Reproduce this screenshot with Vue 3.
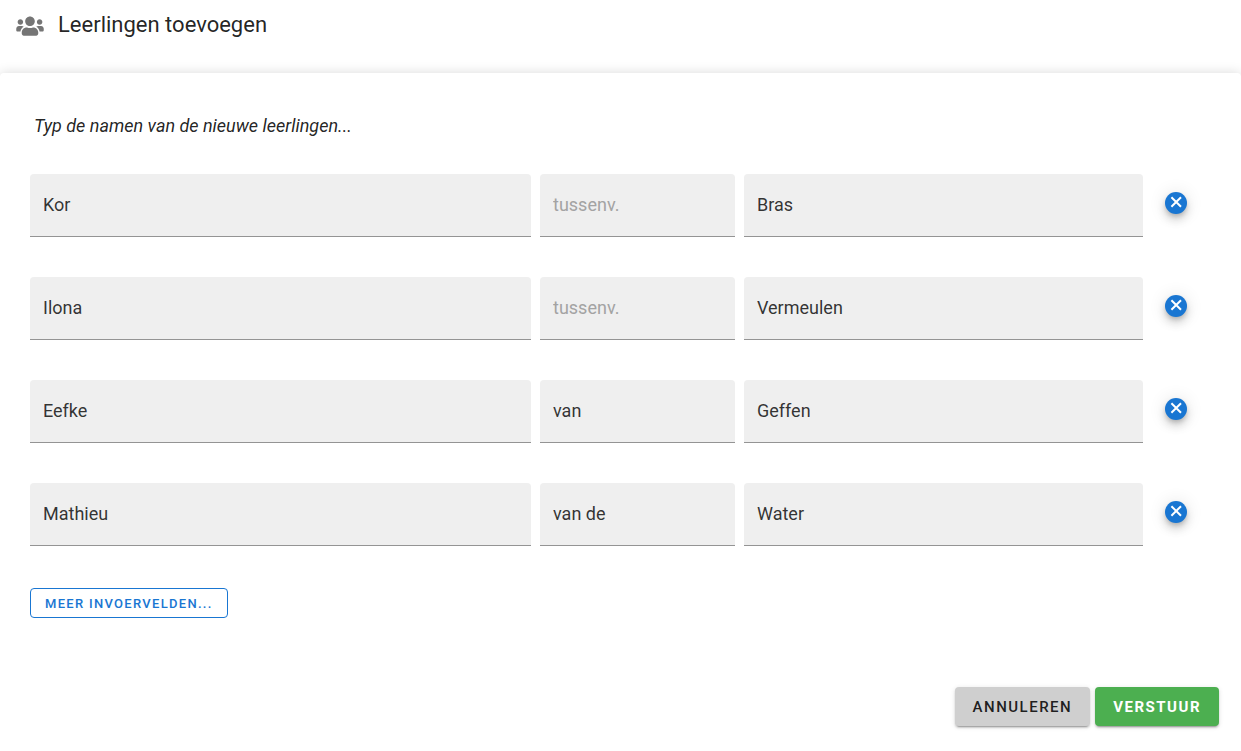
<script setup>
import { ref } from 'vue'

let nextId = 5
const students = ref([
  { id: 1, first: 'Kor', infix: '', last: 'Bras' },
  { id: 2, first: 'Ilona', infix: '', last: 'Vermeulen' },
  { id: 3, first: 'Eefke', infix: 'van', last: 'Geffen' },
  { id: 4, first: 'Mathieu', infix: 'van de', last: 'Water' },
])

function addRow() {
  students.value.push({ id: nextId++, first: '', infix: '', last: '' })
}

function removeRow(id) {
  students.value = students.value.filter((s) => s.id !== id)
}
</script>

<template>
  <div class="page">
    <header class="header">
      <svg class="users" viewBox="0 0 640 512" aria-hidden="true">
        <path
          fill="currentColor"
          d="M96 224c35.3 0 64-28.7 64-64s-28.7-64-64-64-64 28.7-64 64 28.7 64 64 64zm448 0c35.3 0 64-28.7 64-64s-28.7-64-64-64-64 28.7-64 64 28.7 64 64 64zm32 32h-64c-17.6 0-33.5 7.1-45.1 18.6 40.3 22.1 68.9 62 75.1 109.4h66c17.7 0 32-14.3 32-32v-32c0-35.3-28.7-64-64-64zm-256 0c61.9 0 112-50.1 112-112S381.9 32 320 32 208 82.1 208 144s50.1 112 112 112zm76.8 32h-8.3c-20.8 10-43.9 16-68.5 16s-47.6-6-68.5-16h-8.3C179.6 288 128 339.6 128 403.2V432c0 26.5 21.5 48 48 48h288c26.5 0 48-21.5 48-48v-28.8c0-63.6-51.6-115.2-115.2-115.2zm-223.7-13.4C161.5 263.1 145.6 256 128 256H64c-35.3 0-64 28.7-64 64v32c0 17.7 14.3 32 32 32h65.9c6.3-47.4 34.9-87.3 75.2-109.4z"
        />
      </svg>
      <h1 class="title">Leerlingen toevoegen</h1>
    </header>

    <form class="panel" @submit.prevent>
      <p class="intro">Typ de namen van de nieuwe leerlingen...</p>

      <div class="rows">
        <div v-for="s in students" :key="s.id" class="row">
          <input v-model="s.first" class="field" type="text" aria-label="Voornaam" />
          <input v-model="s.infix" class="field" type="text" placeholder="tussenv." aria-label="Tussenvoegsel" />
          <input v-model="s.last" class="field" type="text" aria-label="Achternaam" />
          <button class="remove" type="button" aria-label="Verwijder rij" @click="removeRow(s.id)">
            <svg viewBox="0 0 22 22" aria-hidden="true">
              <path d="M6.4 5.2l9.6 9.6M16 5.2l-9.6 9.6" fill="none" stroke="currentColor" stroke-width="2" />
            </svg>
          </button>
        </div>
      </div>

      <button class="more" type="button" @click="addRow">MEER INVOERVELDEN...</button>

      <div class="actions">
        <button class="action cancel" type="button">ANNULEREN</button>
        <button class="action submit" type="submit">VERSTUUR</button>
      </div>
    </form>
  </div>
</template>

<style>
body {
  margin: 0;
  background: #fff;
}
</style>

<style scoped>
.page,
.page * {
  box-sizing: border-box;
}

.page {
  display: flex;
  flex-direction: column;
  min-height: 100vh;
  font-family: Roboto, "Liberation Sans", sans-serif;
  color: rgba(0, 0, 0, 0.87);
}

.header {
  display: flex;
  align-items: flex-start;
  gap: 14px;
  padding: 9px 16px 32px;
}

.users {
  width: 28px;
  height: 22px;
  margin-top: 6px;
  color: #757575;
}

.title {
  margin: 0;
  font-size: 22px;
  line-height: 32px;
  font-weight: 400;
}

.panel {
  flex: 1;
  padding: 40px 30px 24px;
  border-radius: 4px 4px 0 0;
  background: #fff;
  box-shadow: 0 0 12px rgba(0, 0, 0, 0.15);
}

.intro {
  margin: 0 0 35px;
  padding-left: 4px;
  font-size: 18px;
  line-height: 26px;
  font-style: italic;
}

.rows {
  display: flex;
  flex-direction: column;
  gap: 40px;
}

.row {
  display: grid;
  grid-template-columns: 501fr 195fr 399fr 59px;
  align-items: center;
  gap: 9px;
}

.field {
  width: 100%;
  min-width: 0;
  height: 63px;
  padding: 0 13px 2px;
  border: 0;
  border-bottom: 1px solid #949494;
  border-radius: 4px 4px 0 0;
  outline: 0;
  background: #efefef;
  color: rgba(0, 0, 0, 0.8);
  font-family: inherit;
  font-size: 18px;
}

.field::placeholder {
  color: #a3a3a3;
  opacity: 1;
}

.remove {
  width: 22px;
  height: 22px;
  margin: 0 0 5px 13px;
  padding: 0;
  border: 0;
  border-radius: 50%;
  background: #1976d2;
  color: #fff;
  box-shadow:
    0 3px 5px -1px rgba(0, 0, 0, 0.2),
    0 6px 10px 0 rgba(0, 0, 0, 0.14),
    0 1px 18px 0 rgba(0, 0, 0, 0.12);
  cursor: pointer;
}

.remove svg {
  display: block;
  width: 22px;
  height: 22px;
}

.more {
  display: block;
  height: 30px;
  margin-top: 42px;
  padding: 0 14px;
  border: 1px solid #1976d2;
  border-radius: 4px;
  background: transparent;
  color: #1976d2;
  font-family: inherit;
  font-size: 13px;
  font-weight: 500;
  letter-spacing: 0.1em;
  cursor: pointer;
}

.actions {
  display: flex;
  justify-content: flex-end;
  gap: 5px;
  margin: 69px -8px 0 0;
}

.action {
  height: 39px;
  padding: 0 18px;
  border: 0;
  border-radius: 4px;
  font-family: inherit;
  font-size: 15px;
  font-weight: 500;
  letter-spacing: 0.1em;
  box-shadow:
    0 3px 1px -2px rgba(0, 0, 0, 0.2),
    0 2px 2px 0 rgba(0, 0, 0, 0.14),
    0 1px 5px 0 rgba(0, 0, 0, 0.12);
  cursor: pointer;
}

.cancel {
  background: #cfcfcf;
  color: rgba(0, 0, 0, 0.87);
}

.submit {
  background: #4caf50;
  color: #fff;
  font-weight: 700;
}
</style>
